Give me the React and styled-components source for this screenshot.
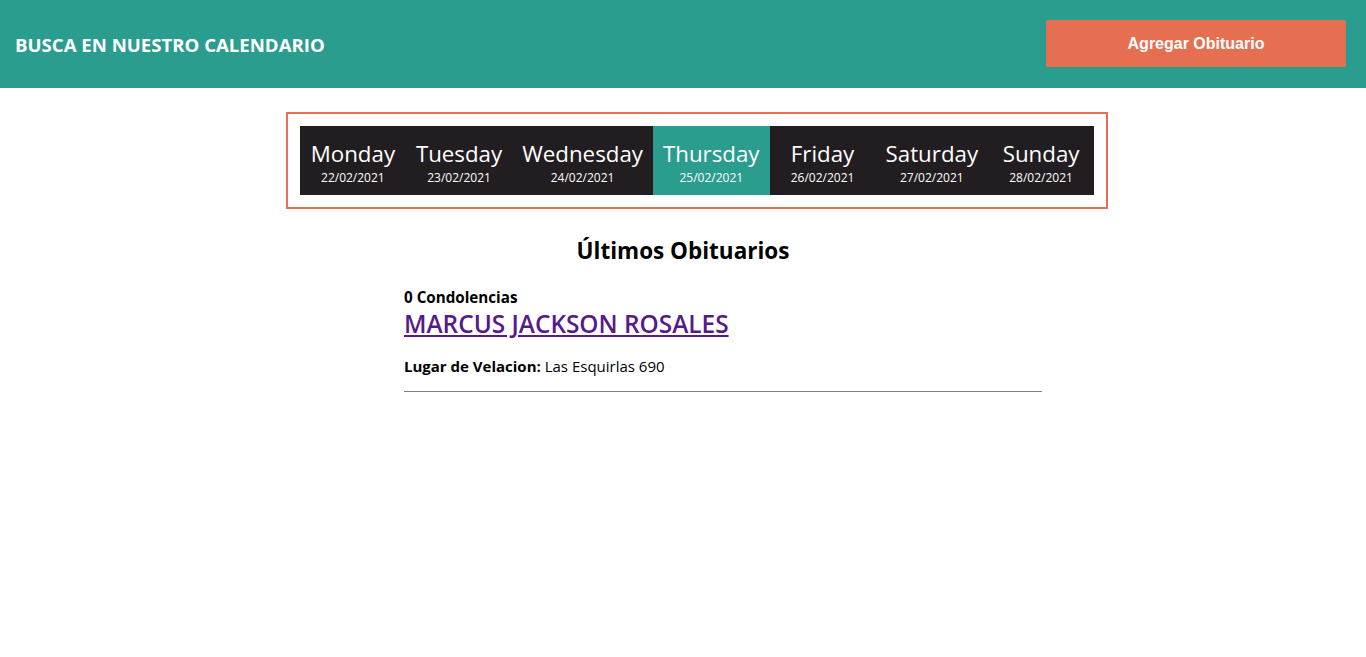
import React from 'react';
import styled, { createGlobalStyle } from 'styled-components';

const GlobalStyle = createGlobalStyle`
	body {
		margin: 0;
		font-family: "Open Sans", "Noto Sans", sans-serif;
		background: #fff;
		color: #000;
	}
`;

const Header = styled.header`
	height: 88px;
	background: #2a9d8f;
	display: flex;
	align-items: center;
	justify-content: space-between;
	padding: 0 20px 0 15px;
`;

const Title = styled.h1`
	margin: 0;
	color: #fff;
	font-size: 18.6px;
	font-weight: 700;
`;

const AddButton = styled.button`
	width: 300px;
	height: 47px;
	margin-bottom: 1px;
	border: none;
	border-radius: 2px;
	background: #e76f51;
	color: #fff;
	font-family: "Liberation Sans", Arial, sans-serif;
	font-weight: 700;
	font-size: 16px;
	cursor: pointer;
`;

const CalendarWrap = styled.div`
	display: flex;
	justify-content: center;
	padding: 24px 0 0 28px;
`;

const CalendarBox = styled.div`
	border: 2px solid #e76f51;
	padding: 12px;
`;

const Week = styled.div`
	display: flex;
	background: #221d20;
`;

const Day = styled.div`
	box-sizing: border-box;
	min-width: 106px;
	display: flex;
	flex-direction: column;
	align-items: center;
	padding: 13px 10px 8px;
	background: ${p => (p.$active ? '#2a9d8f' : 'transparent')};
	color: #fff;
	cursor: pointer;
`;

const DayName = styled.span`
	font-size: 22.3px;
	line-height: 30px;
`;

const DayDate = styled.span`
	font-size: 12px;
	line-height: 18px;
`;

const Heading = styled.h2`
	margin: 26px 0 0;
	text-align: center;
	font-size: 22.5px;
	font-weight: 700;
`;

const List = styled.div`
	width: 638px;
	margin: 21px 0 0 calc(50% - 279px);
`;

const Item = styled.div`
	border-bottom: 1px solid #808080;
	padding-bottom: 15px;
`;

const Condolences = styled.div`
	font-size: 15.2px;
	font-weight: 700;
	line-height: 20px;
`;

const Name = styled.a`
	display: inline-block;
	margin-top: 2px;
	color: #551a8b;
	font-size: 24.4px;
	font-weight: 600;
	line-height: 30px;
	text-decoration: underline;
`;

const Place = styled.p`
	margin: 17px 0 0;
	font-size: 15px;
	line-height: 20px;

	b {
		font-weight: 700;
	}
`;

const days = [
	{ name: 'Monday', date: '22/02/2021' },
	{ name: 'Tuesday', date: '23/02/2021' },
	{ name: 'Wednesday', date: '24/02/2021' },
	{ name: 'Thursday', date: '25/02/2021', active: true },
	{ name: 'Friday', date: '26/02/2021' },
	{ name: 'Saturday', date: '27/02/2021' },
	{ name: 'Sunday', date: '28/02/2021' },
];

export default function App() {
	return (
		<>
			<GlobalStyle />
			<Header>
				<Title>BUSCA EN NUESTRO CALENDARIO</Title>
				<AddButton>Agregar Obituario</AddButton>
			</Header>
			<CalendarWrap>
				<CalendarBox>
					<Week>
						{days.map(d => (
							<Day key={d.name} $active={d.active}>
								<DayName>{d.name}</DayName>
								<DayDate>{d.date}</DayDate>
							</Day>
						))}
					</Week>
				</CalendarBox>
			</CalendarWrap>
			<Heading>Últimos Obituarios</Heading>
			<List>
				<Item>
					<Condolences>0 Condolencias</Condolences>
					<Name href="#">MARCUS JACKSON ROSALES</Name>
					<Place><b>Lugar de Velacion:</b> Las Esquirlas 690</Place>
				</Item>
			</List>
		</>
	);
}
